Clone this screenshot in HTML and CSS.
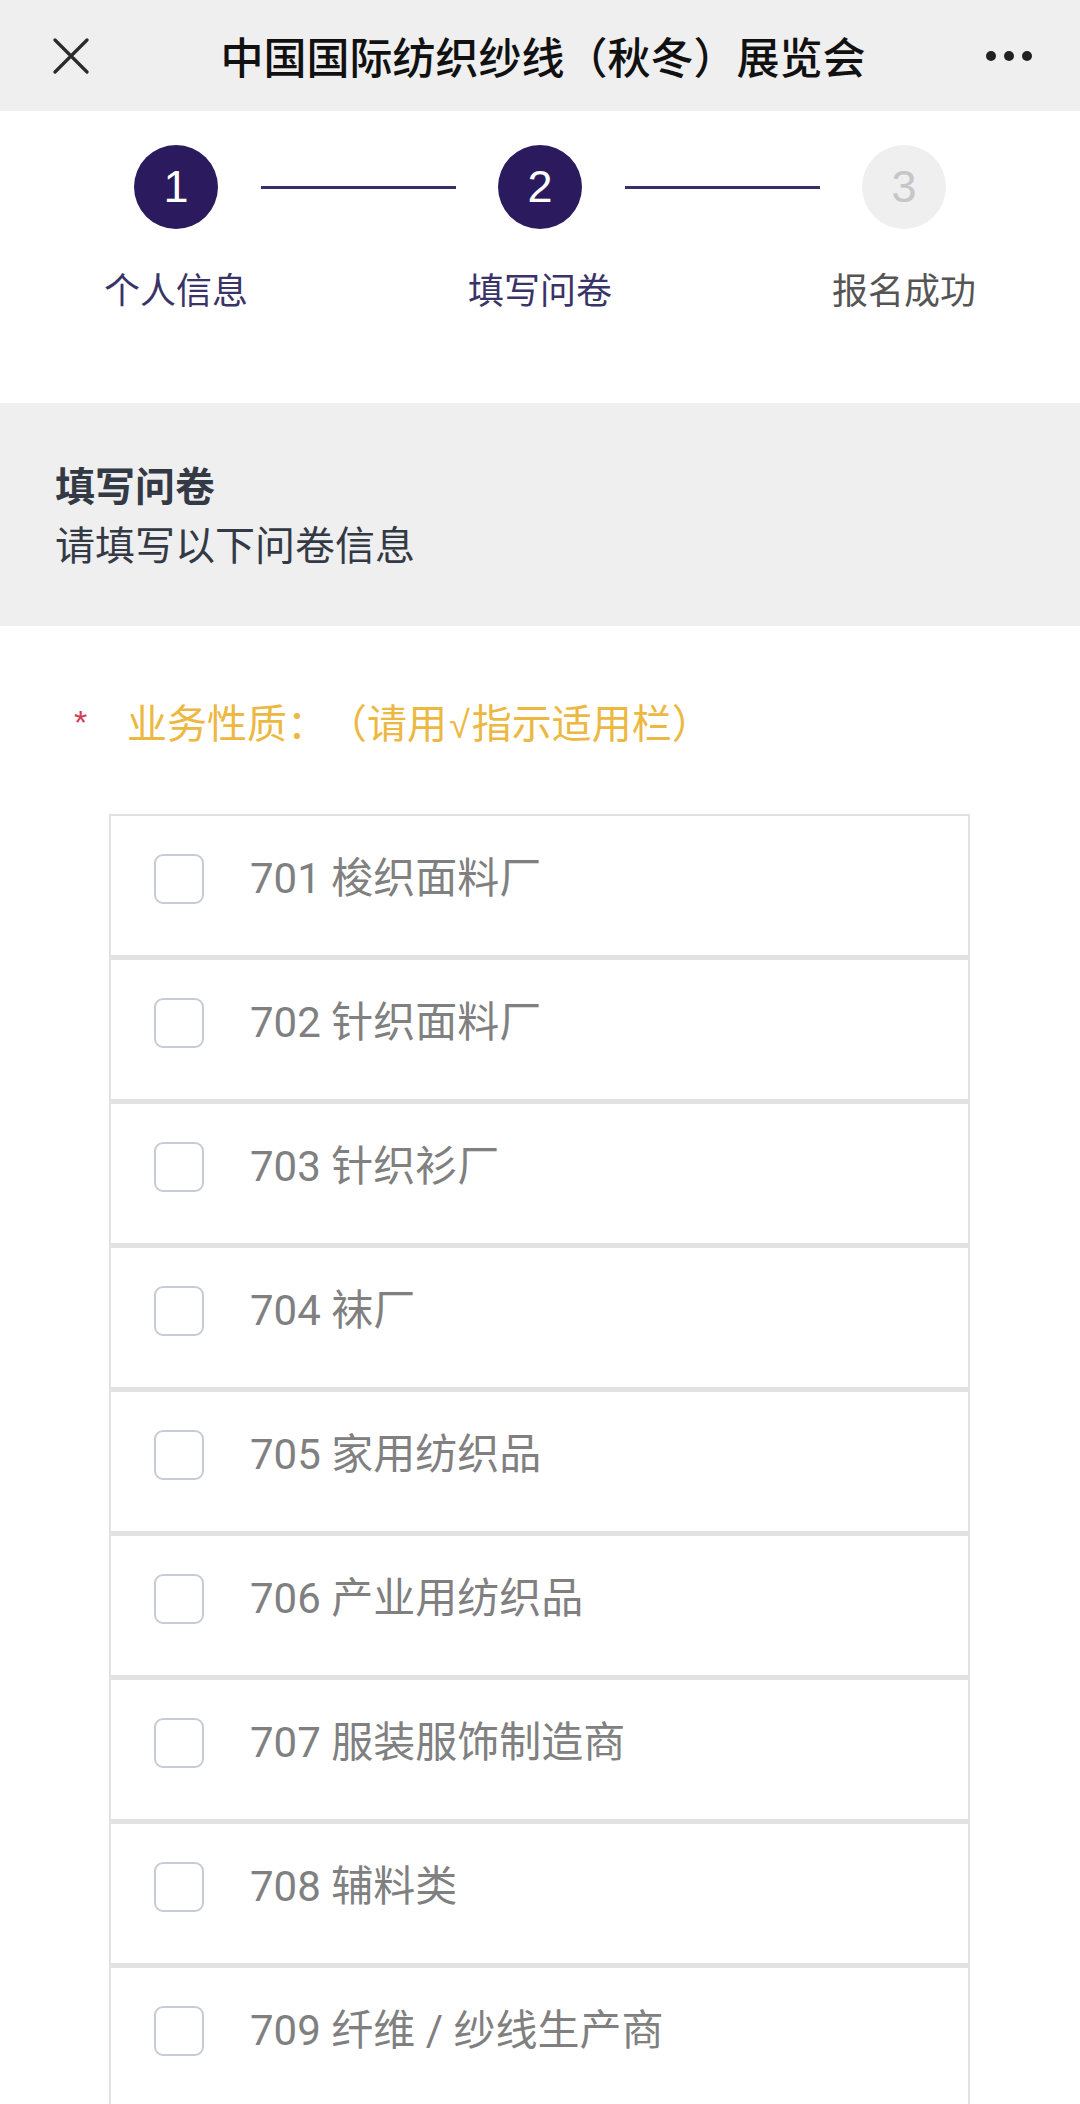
FILE: index.html
```html
<!DOCTYPE html>
<html lang="zh-CN">
<head>
<meta charset="utf-8">
<title>中国国际纺织纱线（秋冬）展览会</title>
<link rel="stylesheet" href="styles.css">
</head>
<body>
<header class="topbar">
  <div class="topbar-left">
    <svg class="icon-close" width="36" height="36" viewBox="0 0 36 36"><path d="M2 2 L34 34 M34 2 L2 34" stroke="#2b2b2b" stroke-width="3.2" stroke-linecap="round" fill="none"/></svg>
  </div>
  <div class="topbar-title">中国国际纺织纱线（秋冬）展览会</div>
  <div class="topbar-right">
    <span class="dot"></span><span class="dot"></span><span class="dot"></span>
  </div>
</header>

<section class="steps">
  <div class="step done">
    <div class="step-circle">1</div>
    <div class="step-label">个人信息</div>
  </div>
  <div class="step-line"></div>
  <div class="step done">
    <div class="step-circle">2</div>
    <div class="step-label">填写问卷</div>
  </div>
  <div class="step-line"></div>
  <div class="step todo">
    <div class="step-circle">3</div>
    <div class="step-label">报名成功</div>
  </div>
</section>

<section class="intro">
  <div class="intro-title">填写问卷</div>
  <div class="intro-sub">请填写以下问卷信息</div>
</section>

<section class="question">
  <div class="q-label"><span class="required">*</span><span class="q-text">业务性质：（请用<span class="tick">√</span>指示适用栏）</span></div>
  <div class="options">
    <label class="option"><span class="checkbox"></span><span class="opt-text">701 梭织面料厂</span></label>
    <label class="option"><span class="checkbox"></span><span class="opt-text">702 针织面料厂</span></label>
    <label class="option"><span class="checkbox"></span><span class="opt-text">703 针织衫厂</span></label>
    <label class="option"><span class="checkbox"></span><span class="opt-text">704 袜厂</span></label>
    <label class="option"><span class="checkbox"></span><span class="opt-text">705 家用纺织品</span></label>
    <label class="option"><span class="checkbox"></span><span class="opt-text">706 产业用纺织品</span></label>
    <label class="option"><span class="checkbox"></span><span class="opt-text">707 服装服饰制造商</span></label>
    <label class="option"><span class="checkbox"></span><span class="opt-text">708 辅料类</span></label>
    <label class="option"><span class="checkbox"></span><span class="opt-text">709 纤维 / 纱线生产商</span></label>
  </div>
</section>
</body>
</html>
```

FILE: styles.css
```css
html, body {
  margin: 0;
  padding: 0;
  background: #ffffff;
}
body {
  width: 1080px;
  overflow: hidden;
  font-family: "Roboto", "Noto Sans CJK SC", sans-serif;
  text-spacing-trim: space-all;
}

/* top bar */
.topbar {
  height: 111px;
  background: #efefef;
  display: grid;
  grid-template-columns: 1fr auto 1fr;
  align-items: center;
}
.topbar-left {
  padding-left: 53px;
  display: flex;
  align-items: center;
}
.icon-close {
  display: block;
}
.topbar-title {
  font-family: "Noto Sans CJK SC", sans-serif;
  font-size: 43px;
  font-weight: 500;
  color: #111111;
  line-height: 1;
  padding-left: 6px;
}
.topbar-right {
  display: flex;
  justify-content: flex-end;
  align-items: center;
  gap: 8px;
  padding-right: 48px;
}
.dot {
  width: 10px;
  height: 10px;
  border-radius: 50%;
  background: #222222;
}

/* steps */
.steps {
  display: flex;
  justify-content: center;
  align-items: flex-start;
  padding: 34px 0 92px;
}
.step {
  width: 84px;
  display: flex;
  flex-direction: column;
  align-items: center;
}
.step-circle {
  width: 84px;
  height: 84px;
  border-radius: 50%;
  display: flex;
  align-items: center;
  justify-content: center;
  font-family: "Liberation Sans", "Roboto", sans-serif;
  font-size: 45px;
  color: #ffffff;
  background: #2b1b5e;
}
.step.todo .step-circle {
  background: #efefef;
  color: #c6c6c6;
}
.step-label {
  margin-top: 38px;
  white-space: nowrap;
  font-family: "Noto Sans CJK SC", sans-serif;
  font-size: 36px;
  line-height: 43px;
  color: #3a3368;
}
.step.todo .step-label {
  color: #555555;
}
.step-line {
  width: 195px;
  height: 3px;
  margin: 41px 42px 0 43px;
  background: #3a2f6c;
}

/* intro */
.intro {
  background: #efefef;
  height: 223px;
  box-sizing: border-box;
  padding: 52px 0 0 55px;
  margin-top: 1px;
  font-family: "Noto Sans CJK SC", sans-serif;
  font-size: 40px;
  line-height: 59px;
  color: #333a45;
}
.intro-title {
  font-weight: 700;
}

/* question */
.question {
  padding-top: 70px;
}
.q-label {
  display: flex;
  align-items: flex-start;
  padding-left: 74px;
  height: 50px;
  line-height: 50px;
}
.required {
  font-family: "Liberation Sans", sans-serif;
  font-size: 34px;
  line-height: 34px;
  color: #d43c55;
  width: 53px;
  padding-top: 9px;
}
.q-text {
  font-family: "Noto Sans CJK SC", sans-serif;
  font-size: 40px;
  color: #ecb842;
  white-space: nowrap;
}
.tick {
  font-family: "Liberation Sans", "DejaVu Sans", sans-serif;
  font-size: 38px;
  padding: 0 2px;
}

.options {
  margin: 68px 110px 0 109px;
  display: flex;
  flex-direction: column;
}
.option {
  display: flex;
  align-items: center;
  gap: 46px;
  border: 2px solid #e2e2e2;
  border-bottom-width: 3px;
  padding: 38px 0 51px 43px;
  height: 50px;
}
.checkbox {
  flex: none;
  width: 50px;
  height: 50px;
  box-sizing: border-box;
  border: 2px solid #c6ccd7;
  border-radius: 9px;
  background: #ffffff;
}
.opt-text {
  font-size: 42px;
  line-height: 50px;
  color: #808080;
  white-space: nowrap;
}
```
